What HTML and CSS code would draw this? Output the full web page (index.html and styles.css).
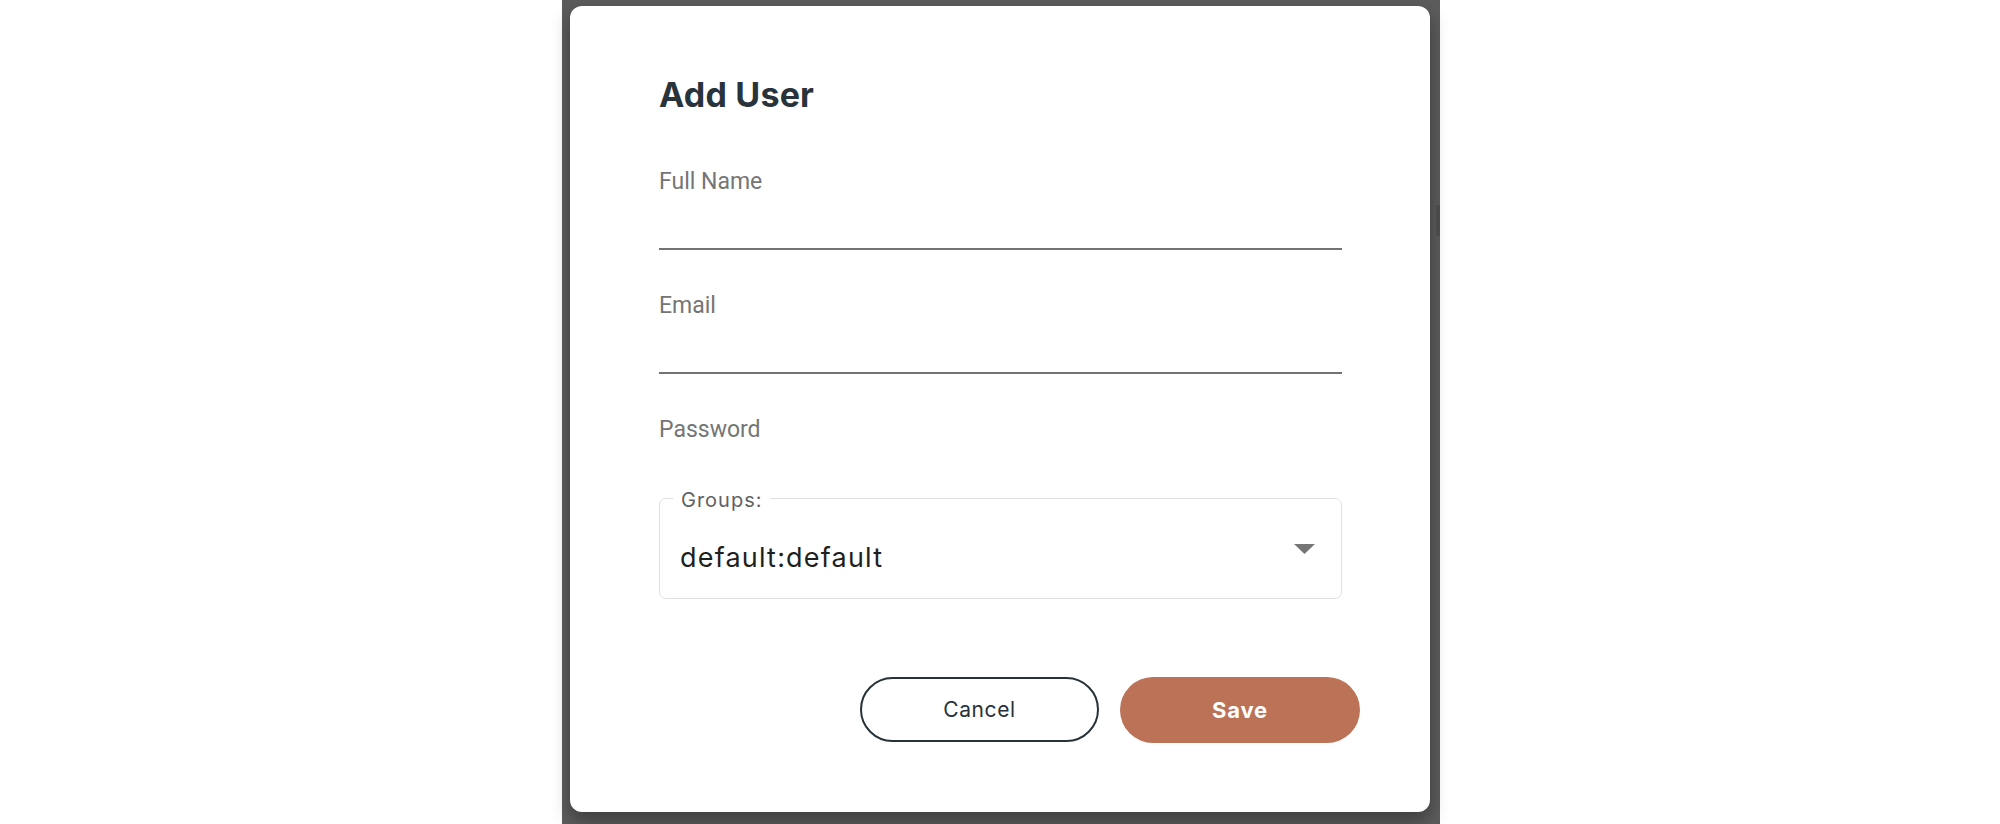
FILE: index.html
```html
<!DOCTYPE html>
<html lang="en">
<head>
<meta charset="utf-8">
<title>Add User</title>
<link rel="stylesheet" href="styles.css">
</head>
<body>
<div class="page">
  <div class="backdrop">
    <div class="scroll-thumb"></div>
    <div class="dialog">
      <h2 class="title">Add User</h2>
      <div class="field">
        <label class="label">Full Name</label>
        <div class="input underline"></div>
      </div>
      <div class="field">
        <label class="label">Email</label>
        <div class="input underline"></div>
      </div>
      <div class="field">
        <label class="label">Password</label>
        <div class="input input-plain"></div>
      </div>
      <fieldset class="groups">
        <legend class="groups-legend">Groups:</legend>
        <div class="select">
          <span class="select-value">default:default</span>
          <svg class="caret" width="21" height="10" viewBox="0 0 21 10"><path d="M0 0 H21 L10.5 10 Z" fill="#767676"/></svg>
        </div>
      </fieldset>
      <div class="actions">
        <button class="btn btn-cancel">Cancel</button>
        <button class="btn btn-save">Save</button>
      </div>
    </div>
  </div>
</div>
</body>
</html>
```
FILE: styles.css
```css
html, body {
  margin: 0;
  padding: 0;
  background: #ffffff;
}
.page {
  width: 2000px;
  height: 824px;
  display: flex;
  justify-content: flex-start;
  padding-left: 562px;
  box-sizing: border-box;
  overflow: hidden;
}
.backdrop {
  position: relative;
  width: 878px;
  height: 824px;
  background: #5c5c5c;
  padding: 6px 10px 0 8px;
  box-sizing: border-box;
}
.scroll-thumb {
  position: absolute;
  right: 0;
  top: 205px;
  width: 4px;
  height: 31px;
  background: #4a4a4a;
}
.dialog {
  width: 860px;
  height: 806px;
  background: #ffffff;
  border-radius: 12px;
  box-shadow: 0 8px 18px rgba(0,0,0,0.35);
  padding: 69px 70px 0 89px;
  box-sizing: border-box;
  display: flex;
  flex-direction: column;
}
.title {
  margin: 0;
  font-family: "Inter", sans-serif;
  font-weight: 700;
  font-size: 34px;
  line-height: 40px;
  color: #29333b;
  letter-spacing: 0.2px;
}
.field {
  width: 683px;
  display: flex;
  flex-direction: column;
}
.field:first-of-type {
  margin-top: 54px;
}
.field + .field {
  margin-top: 43px;
}
.label {
  font-family: "Roboto", sans-serif;
  font-size: 23px;
  line-height: 26px;
  color: #757575;
}
.input {
  height: 55px;
  box-sizing: border-box;
}
.input-plain {
  height: 43px;
}
.underline {
  border-bottom: 2px solid #737373;
}
.groups {
  margin: 0;
  width: 683px;
  height: 113px;
  box-sizing: border-box;
  border: 1.5px solid #e0e0e0;
  border-radius: 7px;
  padding: 0 26px 0 20px;
  min-inline-size: 0;
}
.groups-legend {
  font-family: "Inter", sans-serif;
  font-size: 20px;
  line-height: 20px;
  padding: 4px 7px 0 8px;
  letter-spacing: 1px;
  color: #616161;
  margin-left: -7px;
}
.select {
  display: flex;
  align-items: center;
  justify-content: space-between;
  height: 78px;
}
.select-value {
  font-family: "Inter", sans-serif;
  font-size: 27px;
  line-height: 32px;
  letter-spacing: 1.2px;
  color: #1f1f1f;
  padding-top: 18px;
}
.caret {
  display: block;
}
.actions {
  margin-top: 78px;
  display: flex;
  justify-content: flex-end;
  gap: 21px;
}
.btn {
  font-family: "Inter", sans-serif;
  font-size: 21px;
  letter-spacing: 0.6px;
  border-radius: 40px;
  cursor: pointer;
  box-sizing: border-box;
}
.btn-cancel {
  width: 239px;
  height: 65px;
  background: #ffffff;
  border: 2px solid #263238;
  color: #263238;
}
.btn-save {
  width: 240px;
  height: 66px;
  background: #bb7257;
  border: none;
  color: #ffffff;
  font-weight: 700;
  font-size: 22px;
  letter-spacing: 0.8px;
}
```
